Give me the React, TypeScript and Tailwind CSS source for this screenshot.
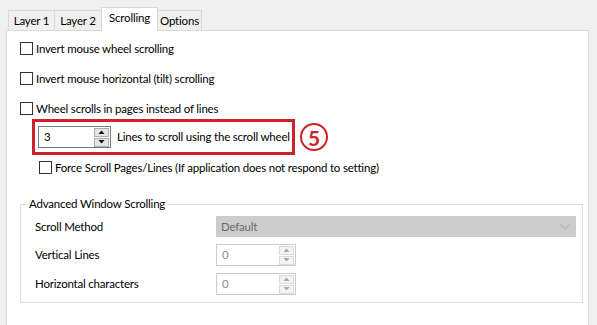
import React from "react";

const Check = ({ label }: { label: string }) => (
  <div className="flex items-center h-[13px]">
    <div className="w-[13px] h-[13px] border border-[#333333] bg-white shrink-0" />
    <span className="ml-[3px] leading-none whitespace-nowrap">{label}</span>
  </div>
);

const Spin = ({
  value,
  disabled,
  w,
}: {
  value: string;
  disabled?: boolean;
  w: string;
}) => (
  <div
    className={
      "flex shrink-0 h-[22px] border bg-white " +
      w +
      (disabled ? " border-[#cccccc]" : " border-[#7a7a7a]")
    }
  >
    <div
      className={
        "flex-1 flex items-center pl-[5px] leading-none " +
        (disabled ? "text-[#8d8d8d]" : "text-black")
      }
    >
      {value}
    </div>
    <div className="flex flex-col justify-center gap-[1px] pr-[1px]">
      {[0, 1].map((i) => (
        <div
          key={i}
          className={
            "w-[15px] h-[9px] flex items-center justify-center border " +
            (disabled
              ? "border-[#dadada] bg-[#f3f3f3]"
              : "border-[#adadad] bg-[#e5e5e5]")
          }
        >
          <svg width="7" height="4" viewBox="0 0 7 4">
            <path
              d={i === 0 ? "M0.5 4 L3.5 0.5 L6.5 4 Z" : "M0.5 0 L3.5 3.5 L6.5 0 Z"}
              fill={disabled ? "#a8a8a8" : "#111111"}
            />
          </svg>
        </div>
      ))}
    </div>
  </div>
);

export default function App() {
  return (
    <div
      className="w-[597px] h-[325px] bg-[#f0f0f0] overflow-hidden text-[11.5px] tracking-[-0.2px] text-black"
      style={{ fontFamily: 'Lato, "Segoe UI", sans-serif' }}
    >
      {/* Tabs */}
      <div className="flex items-end h-[30px] pl-[8px]">
        <div className="h-[20px] w-[47px] border border-b-0 border-[#d9d9d9] bg-[#f0f0f0] flex items-center justify-center leading-none">
          Layer 1
        </div>
        <div className="h-[20px] w-[48px] -ml-px border border-b-0 border-[#d9d9d9] bg-[#f0f0f0] flex items-center justify-center leading-none">
          Layer 2
        </div>
        <div className="relative z-10 h-[24px] w-[57px] -ml-px -mb-px border border-b-0 border-[#d9d9d9] bg-white flex items-start pt-[4px] justify-center leading-none">
          Scrolling
        </div>
        <div className="h-[20px] w-[45px] -ml-px border border-b-0 border-[#d9d9d9] bg-[#f0f0f0] flex items-center justify-center leading-none">
          Options
        </div>
      </div>

      {/* Panel */}
      <div className="ml-[6px] w-[583px] h-[300px] border border-[#d9d9d9] bg-white pl-[13px] pt-[11px]">
        <div className="flex flex-col gap-[17px]">
          <Check label="Invert mouse wheel scrolling" />
          <Check label="Invert mouse horizontal (tilt) scrolling" />
          <Check label="Wheel scrolls in pages instead of lines" />
        </div>

        {/* Annotated row */}
        <div className="flex items-center mt-[4px] ml-[12px]">
          <div className="w-[263px] h-[36px] border-[3px] border-[#d0202a] flex items-center pl-[3px]">
            <Spin value="3" w="w-[73px]" />
            <span className="ml-[6px] leading-none whitespace-nowrap">
              Lines to scroll using the scroll wheel
            </span>
          </div>
          <div className="ml-[5px] w-[28px] h-[28px] rounded-full border-[2.5px] border-[#d0202a] flex items-center justify-center text-[#d0202a] font-bold text-[21px] leading-none tracking-normal">
            5
          </div>
        </div>

        <div className="mt-[6px] ml-[19px]">
          <Check label="Force Scroll Pages/Lines (If application does not respond to setting)" />
        </div>

        {/* Group box */}
        <div className="relative mt-[30px] w-[563px] h-[99px] border border-[#dcdcdc]">
          <span className="absolute -top-[8px] left-[6px] bg-white px-[2px] leading-[14px]">
            Advanced Window Scrolling
          </span>
          <div className="flex flex-col pt-[11px] pl-[14px] pr-[6px] gap-[7px]">
            <div className="flex items-center h-[21px]">
              <span className="w-[181px] leading-none">Scroll Method</span>
              <div className="flex-1 h-[21px] bg-[#cccccc] flex items-center justify-between pl-[5px] pr-[6px] text-[#6d6d6d]">
                <span className="leading-none">Default</span>
                <svg width="10" height="6" viewBox="0 0 10 6">
                  <path d="M0.5 0.5 L5 5 L9.5 0.5" stroke="#a8a8a8" strokeWidth="1" fill="none" />
                </svg>
              </div>
            </div>
            <div className="flex items-center h-[22px]">
              <span className="w-[181px] leading-none">Vertical Lines</span>
              <Spin value="0" disabled w="w-[80px]" />
            </div>
            <div className="flex items-center h-[22px]">
              <span className="w-[181px] leading-none">Horizontal characters</span>
              <Spin value="0" disabled w="w-[80px]" />
            </div>
          </div>
        </div>
      </div>
    </div>
  );
}
